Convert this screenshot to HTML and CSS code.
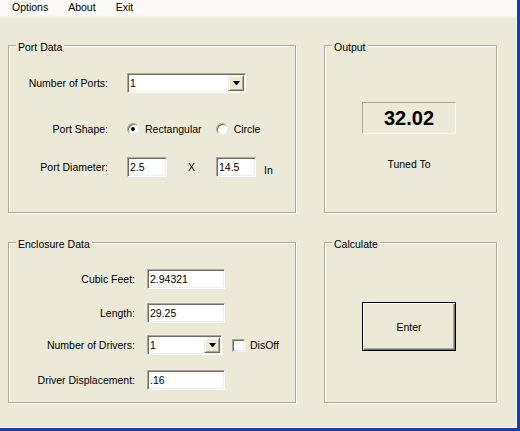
FILE: index.html
```html
<!DOCTYPE html>
<html lang="en">
<head>
    <meta charset="UTF-8">
    <title>Port Calculator</title>
    <link rel="stylesheet" href="styles.css">
</head>
<body>
    <div class="window">
        <div class="menubar">
            <span class="menu">Options</span>
            <span class="menu">About</span>
            <span class="menu">Exit</span>
        </div>

        <div class="client">
            <fieldset class="group port-data">
                <legend>Port Data</legend>
                <div class="row ports">
                    <span class="lbl">Number of Ports:</span>
                    <div class="combo ports-combo"><span class="val">1</span><span class="drop"></span></div>
                </div>
                <div class="row shape">
                    <span class="lbl">Port Shape:</span>
                    <span class="radio checked"></span><span class="opt">Rectangular</span>
                    <span class="radio"></span><span class="opt">Circle</span>
                </div>
                <div class="row diameter">
                    <span class="lbl">Port Diameter:</span>
                    <div class="edit short">2.5</div>
                    <span class="times">X</span>
                    <div class="edit short">14.5</div>
                    <span class="unit">In</span>
                </div>
            </fieldset>

            <fieldset class="group output">
                <legend>Output</legend>
                <div class="display">32.02</div>
                <div class="tuned">Tuned To</div>
            </fieldset>

            <fieldset class="group enclosure">
                <legend>Enclosure Data</legend>
                <div class="row cubic">
                    <span class="lbl">Cubic Feet:</span>
                    <div class="edit long">2.94321</div>
                </div>
                <div class="row length">
                    <span class="lbl">Length:</span>
                    <div class="edit long">29.25</div>
                </div>
                <div class="row drivers">
                    <span class="lbl">Number of Drivers:</span>
                    <div class="combo drivers-combo"><span class="val">1</span><span class="drop"></span></div>
                    <span class="check"></span><span class="check-text">DisOff</span>
                </div>
                <div class="row displacement">
                    <span class="lbl">Driver Displacement:</span>
                    <div class="edit long">.16</div>
                </div>
            </fieldset>

            <fieldset class="group calculate">
                <legend>Calculate</legend>
                <button class="enter" type="button">Enter</button>
            </fieldset>
        </div>
    </div>
</body>
</html>
```

FILE: styles.css
```css
body {
    margin: 0;
    font-family: "Liberation Sans", Arial, sans-serif;
    font-size: 10.5px;
    color: #000;
    background: #ece9d8;
}
.window {
    width: 520px;
    height: 431px;
    box-sizing: border-box;
    background: #ece9d8;
    border-right: 3px solid #163cb5;
    border-bottom: 3px solid #163cb5;
    box-shadow: inset -1px -1px 0 #f6f5ee;
}

/* menu strip */
.menubar {
    height: 19px;
    display: flex;
    gap: 20px;
    padding-left: 12px;
    line-height: 14px;
    background: linear-gradient(#faf9f5 0, #faf9f5 15px, #ece9d8 19px);
}

/* group boxes */
.client {
    display: grid;
    grid-template-columns: 288px 173px;
    grid-template-rows: 176px 169px;
    column-gap: 28px;
    row-gap: 21px;
    padding: 18px 0 0 8px;
}
.group {
    margin: 0;
    padding: 0;
    min-width: 0;
    border: 1px solid #aca899;
    box-shadow: inset 1px 1px 0 #fff, 1px 1px 0 #fff;
}
.group legend {
    margin-left: 7px;
    padding: 4px 2px 0;
    line-height: 13px;
    background: #ece9d8;
}

.row {
    display: flex;
    align-items: center;
    height: 20px;
}
.lbl {
    text-align: right;
    white-space: nowrap;
}

/* sunken fields */
.edit, .combo {
    height: 20px;
    box-sizing: border-box;
    background: #fff;
    border: 1px solid;
    border-color: #aca899 #fff #fff #aca899;
    box-shadow: inset 1px 1px 0 #716f64, inset -1px -1px 0 #f1efe2;
    display: flex;
    align-items: center;
    padding-left: 2px;
}
.combo .val { flex: 1; }
.drop {
    width: 16px;
    height: 16px;
    margin-right: 1px;
    box-sizing: border-box;
    background: #ece9d8;
    border: 1px solid;
    border-color: #f1efe2 #716f64 #716f64 #f1efe2;
    box-shadow: inset 1px 1px 0 #fff, inset -1px -1px 0 #aca899;
    display: flex;
    align-items: center;
    justify-content: center;
}
.drop::after {
    content: "";
    width: 1px;
    border-top: 4px solid #000;
    border-left: 3px solid transparent;
    border-right: 3px solid transparent;
}

.radio {
    width: 12px;
    height: 12px;
    box-sizing: border-box;
    border-radius: 50%;
    background: #fff;
    border: 1px solid;
    border-color: #aca899 #f1efe2 #f1efe2 #aca899;
    box-shadow: inset 1px 1px 0 #716f64;
    display: flex;
    align-items: center;
    justify-content: center;
    margin-right: 6px;
}
.radio.checked::after {
    content: "";
    width: 4px;
    height: 4px;
    border-radius: 50%;
    background: #000;
}
.opt { margin-right: 14px; }

.check {
    width: 13px;
    height: 13px;
    box-sizing: border-box;
    background: #fff;
    border: 1px solid;
    border-color: #aca899 #fff #fff #aca899;
    box-shadow: inset 1px 1px 0 #716f64, inset -1px -1px 0 #f1efe2;
    margin-left: 10px;
}
.check-text { margin-left: 5px; }

/* Port Data */
.port-data .lbl { width: 99px; margin-right: 19px; }
.ports { margin-top: 19px; }
.shape { margin-top: 26px; }
.diameter { margin-top: 18px; }
.ports-combo { width: 119px; }
.edit.short { width: 40px; }
.times { width: 49px; text-align: center; }
.unit { margin-left: 8px; align-self: flex-end; line-height: 13px; }

/* Output */
.display {
    margin: 48px 0 0 37px;
    width: 94px;
    height: 32px;
    box-sizing: border-box;
    border: 1px solid;
    border-color: #aca899 #fff #fff #aca899;
    display: flex;
    align-items: center;
    justify-content: center;
    font-size: 20px;
    font-weight: bold;
}
.tuned {
    margin: 24px 0 0 37px;
    width: 94px;
    text-align: center;
    line-height: 13px;
}

/* Enclosure Data */
.enclosure .lbl { width: 126px; margin-right: 12px; }
.cubic { margin-top: 18px; }
.length { margin-top: 14px; }
.drivers { margin-top: 12px; }
.displacement { margin-top: 15px; }
.edit.long { width: 78px; }
.drivers-combo { width: 75px; }

/* Calculate */
.enter {
    margin: 51px 0 0 37px;
    width: 94px;
    height: 49px;
    padding: 0;
    font: inherit;
    color: #000;
    background: #ece9d8;
    border: 1px solid #000;
    box-shadow: inset 1px 1px 0 #fff, inset -1px -1px 0 #716f64, inset -2px -2px 0 #aca899;
    display: block;
}
```
